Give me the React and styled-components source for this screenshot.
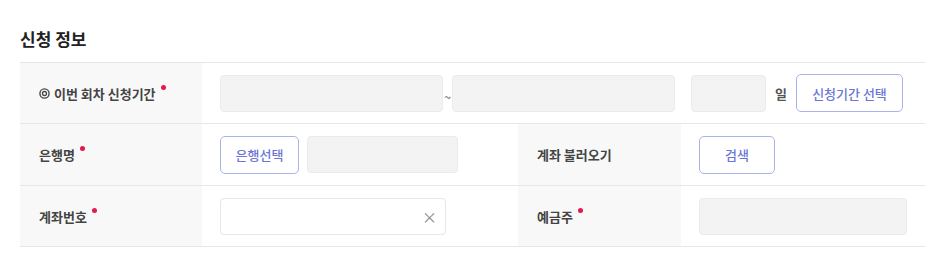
import React from 'react';
import styled, { createGlobalStyle } from 'styled-components';

const GlobalStyle = createGlobalStyle`
  body {
    margin: 0;
    background: #fff;
    font-family: "Noto Sans CJK KR", "Noto Sans", sans-serif;
  }
`;

const Section = styled.section`
  padding: 26px 10px 0 20px;
  width: 905px;
`;

const Title = styled.h3`
  margin: 0 0 10px;
  font-size: 17px;
  font-weight: 700;
  color: #222;
  line-height: 26px;
`;

const Table = styled.div`
  border-top: 1px solid #e6e6e6;
`;

const Row = styled.div`
  display: grid;
  grid-template-columns: ${(p) => (p.wide ? '182px 1fr' : '182px 316px 163px 1fr')};
  height: ${(p) => p.h || 60}px;
  border-bottom: 1px solid #e6e6e6;
`;

const Label = styled.div`
  display: flex;
  align-items: center;
  padding-left: 19px;
  background: #f8f8f8;
  font-size: 13px;
  font-weight: 700;
  color: #444;
`;

const Required = styled.span`
  width: 5px;
  height: 5px;
  border-radius: 50%;
  background: #e1194f;
  margin-left: 5px;
  align-self: center;
  transform: translateY(-6px);
`;

const TargetIcon = styled.svg`
  width: 11px;
  height: 11px;
  margin-right: 4px;
`;

const Cell = styled.div`
  display: flex;
  align-items: center;
  padding-left: 18px;
`;

const Field = styled.div`
  position: relative;
  width: ${(p) => p.w}px;
  height: 37px;
  box-sizing: border-box;
  border: 1px solid ${(p) => (p.white ? '#e6e6e6' : '#ebebeb')};
  border-radius: 4px;
  background: ${(p) => (p.white ? '#fff' : '#f3f3f3')};
  margin-left: ${(p) => p.ml || 0}px;
`;

const Clear = styled.span`
  position: absolute;
  right: 8px;
  top: 50%;
  transform: translateY(-50%);
  font-size: 15px;
  color: #888;
  line-height: 1;
`;

const Tilde = styled.span`
  width: 9px;
  text-align: center;
  font-size: 12px;
  color: #555;
  padding-top: 6px;
`;

const Unit = styled.span`
  margin: 0 9px;
  font-size: 13px;
  font-weight: 700;
  color: #555;
`;

const Button = styled.button`
  width: ${(p) => p.w}px;
  height: 38px;
  box-sizing: border-box;
  border: 1.5px solid #a9b2ea;
  border-radius: 5px;
  background: #fff;
  color: #6b76d6;
  font-family: inherit;
  font-size: 13px;
  font-weight: 500;
  padding: 0;
  cursor: pointer;
`;

const App = () => (
  <>
    <GlobalStyle />
    <Section>
      <Title>신청 정보</Title>
      <Table>
        <Row wide>
          <Label>
            <TargetIcon viewBox="0 0 12 12">
              <circle cx="6" cy="6" r="5" fill="none" stroke="#444" strokeWidth="1.5" />
              <circle cx="6" cy="6" r="2.2" fill="none" stroke="#444" strokeWidth="1.4" />
            </TargetIcon>
            이번 회차 신청기간<Required />
          </Label>
          <Cell>
            <Field w={223} />
            <Tilde>~</Tilde>
            <Field w={223} />
            <Field w={75} ml={16} />
            <Unit>일</Unit>
            <Button w={107}>신청기간 선택</Button>
          </Cell>
        </Row>
        <Row h={61}>
          <Label>
            은행명<Required />
          </Label>
          <Cell>
            <Button w={79}>은행선택</Button>
            <Field w={151} ml={8} />
          </Cell>
          <Label>계좌 불러오기</Label>
          <Cell>
            <Button w={76}>검색</Button>
          </Cell>
        </Row>
        <Row>
          <Label>
            계좌번호<Required />
          </Label>
          <Cell>
            <Field w={226} white>
              <Clear>×</Clear>
            </Field>
          </Cell>
          <Label>
            예금주<Required />
          </Label>
          <Cell>
            <Field w={208} />
          </Cell>
        </Row>
      </Table>
    </Section>
  </>
);

export default App;
